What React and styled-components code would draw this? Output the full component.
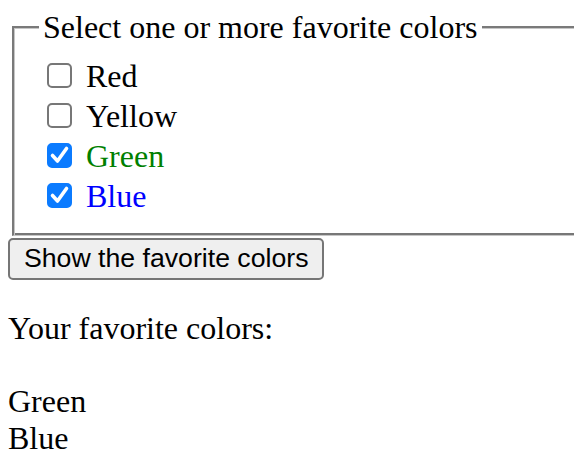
import React, { useState } from "react";
import styled, { createGlobalStyle } from "styled-components";

const Global = createGlobalStyle`
  html, body { margin: 0; padding: 0; overflow: hidden; background: #fff; }
  body { padding: 8px; font-family: "Liberation Serif", "Times New Roman", serif; font-size: 32px; color: #000; }
`;

const Fieldset = styled.fieldset`
  width: 640px;
  margin: 1px 4px 0;
  padding: 10px 25px 19px;
  border-style: solid;
  border-width: 2px 1px 1px 2px;
  border-color: #7a7a7a #c6c6c6 #c6c6c6 #7a7a7a;
  box-shadow: inset 1px 1px 0 #c6c6c6, inset -2px -2px 0 #777;
`;

const Legend = styled.legend`
  padding: 0 4px;
  line-height: 36.8px;
  background: #fff;
`;

const Row = styled.label`
  display: flex;
  align-items: center;
  height: 40px;
  line-height: 40px;
  color: ${(p) => p.$color || "#000"};
  cursor: pointer;
`;

const BoxWrap = styled.span`
  position: relative;
  width: 25px;
  height: 25px;
  margin: 0 14px 1px 8px;
  flex: none;
`;

const Box = styled.input`
  appearance: none;
  -webkit-appearance: none;
  box-sizing: border-box;
  width: 25px;
  height: 25px;
  margin: 0;
  border: 2px solid #777;
  border-radius: 5px;
  background: #fff;
  display: block;
  &:checked {
    background: #0b7bff;
    border-color: #0b7bff;
  }
`;

const Check = styled.svg`
  position: absolute;
  left: 0;
  top: 0;
  pointer-events: none;
`;

const Button = styled.button`
  display: block;
  margin-top: 2px;
  height: 42px;
  padding: 0 14px;
  font-family: "Liberation Sans", Arial, sans-serif;
  font-size: 26.67px;
  color: #000;
  background: #efefef;
  border: 2px solid #767676;
  border-radius: 5px;
`;

const Result = styled.div`
  margin-top: 30px;
  line-height: 36.6px;
`;

const Line = styled.div`
  min-height: 36.6px;
`;

const colors = [
  { name: "Red", color: "#000", checked: false },
  { name: "Yellow", color: "#000", checked: false },
  { name: "Green", color: "#008000", checked: true },
  { name: "Blue", color: "#0000ff", checked: true },
];

export default function App() {
  const [state, setState] = useState(colors.map((c) => c.checked));
  const [shown, setShown] = useState(["Green", "Blue"]);
  return (
    <>
      <Global />
      <Fieldset>
        <Legend>Select one or more favorite colors</Legend>
        {colors.map((c, i) => (
          <Row key={c.name} $color={state[i] ? c.color : "#000"}>
            <BoxWrap>
              <Box
                type="checkbox"
                checked={state[i]}
                onChange={() => setState(state.map((v, j) => (j === i ? !v : v)))}
              />
              {state[i] && (
                <Check width="25" height="25" viewBox="0 0 25 25">
                  <path d="M5.5 12.5 L10.5 18 L19.5 5.5" fill="none" stroke="#fff" strokeWidth="3.6" strokeLinecap="round" strokeLinejoin="round" />
                </Check>
              )}
            </BoxWrap>
            {c.name}
          </Row>
        ))}
      </Fieldset>
      <Button onClick={() => setShown(colors.filter((c, i) => state[i]).map((c) => c.name))}>
        Show the favorite colors
      </Button>
      <Result>
        <Line>Your favorite colors:</Line>
        <Line />
        {shown.map((n) => (
          <Line key={n}>{n}</Line>
        ))}
      </Result>
    </>
  );
}
